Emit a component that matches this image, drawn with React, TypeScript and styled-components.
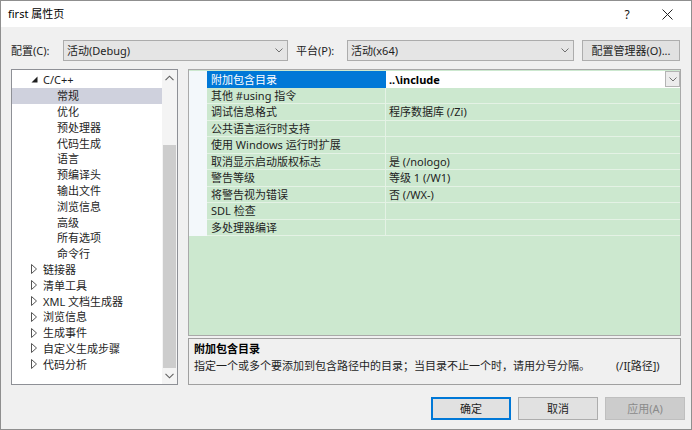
import React from "react";
import styled, { createGlobalStyle, css } from "styled-components";

const GlobalStyle = createGlobalStyle`
  html, body { margin: 0; padding: 0; background: #f0f0f0; }
  body {
    font-family: "Segoe UI", "Noto Sans", "Noto Sans CJK SC", sans-serif;
    font-size: 11px;
    color: #1e1e1e;
  }
  * { box-sizing: border-box; }
`;

const Window = styled.div`
  width: 692px;
  height: 430px;
  border: 1px solid #8f8f8f;
  background: #f0f0f0;
  display: flex;
  flex-direction: column;
  overflow: hidden;
`;

const TitleBar = styled.div`
  height: 26px;
  background: #ffffff;
  display: flex;
  align-items: center;
  padding-left: 7px;
  font-size: 11px;
  color: #000;
`;

const TitleText = styled.div`
  flex: 1;
  line-height: 16px;
`;

const TitleControl = styled.div<{ $w: number }>`
  width: ${(p) => p.$w}px;
  height: 26px;
  display: flex;
  align-items: center;
  justify-content: center;
  font-size: 12px;
  color: #111;
`;

const Body = styled.div`
  flex: 1;
  display: flex;
  flex-direction: column;
  padding: 0 9px 0 10px;
`;

const ConfigRow = styled.div`
  margin-top: 13px;
  height: 21px;
  display: flex;
  align-items: center;
`;

const Label = styled.div<{ $w: number; $ml?: number }>`
  width: ${(p) => p.$w}px;
  margin-left: ${(p) => p.$ml ?? 0}px;
  line-height: 16px;
`;

const Combo = styled.div<{ $w: number }>`
  width: ${(p) => p.$w}px;
  height: 21px;
  background: #e5e5e5;
  border: 1px solid #acacac;
  display: flex;
  align-items: center;
  padding-left: 3px;
  line-height: 16px;
`;

const ComboText = styled.div`
  flex: 1;
`;

const ComboArrow = styled.div`
  width: 17px;
  display: flex;
  align-items: center;
  justify-content: center;
`;

type Variant = "normal" | "focus" | "disabled";

const PushButton = styled.div<{ $w: number; $ml?: number; $h?: number; $variant?: Variant }>`
  width: ${(p) => p.$w}px;
  margin-left: ${(p) => p.$ml ?? 0}px;
  height: ${(p) => p.$h ?? 21}px;
  background: #e1e1e1;
  border: 1px solid #adadad;
  display: flex;
  align-items: center;
  justify-content: center;
  line-height: 16px;
  color: #1e1e1e;
  ${(p) =>
    p.$variant === "focus" &&
    css`
      border: 2px solid #0078d7;
    `}
  ${(p) =>
    p.$variant === "disabled" &&
    css`
      background: #cccccc;
      border-color: #bfbfbf;
      color: #8a8a8a;
    `}
`;

const Main = styled.div`
  margin-top: 8px;
  height: 316px;
  display: flex;
  gap: 10px;
`;

const TreePanel = styled.div`
  width: 167px;
  border: 1px solid #8e9096;
  background: #ffffff;
  display: flex;
`;

const TreeList = styled.div`
  flex: 1;
  padding-top: 2px;
  display: flex;
  flex-direction: column;
`;

const TreeRow = styled.div<{ $level: number; $selected?: boolean }>`
  height: 15.8px;
  display: flex;
  align-items: center;
  padding-left: ${(p) => (p.$level === 0 ? 18 : 45)}px;
  background: ${(p) => (p.$selected ? "#cfd1dd" : "transparent")};
  line-height: 15px;
  white-space: nowrap;
  color: #1e1e1e;
`;

const Toggle = styled.div`
  width: 13px;
  height: 15px;
  display: flex;
  align-items: center;
  padding-left: 1px;
`;

const ScrollBar = styled.div`
  width: 15px;
  display: flex;
  flex-direction: column;
  background: #f4f4f4;
`;

const ScrollArrow = styled.div`
  height: 17px;
  display: flex;
  align-items: center;
  justify-content: center;
`;

const ScrollTrack = styled.div`
  flex: 1;
  padding-top: 58px;
  padding-left: 1px;
`;

const ScrollThumb = styled.div`
  width: 13px;
  height: 223px;
  background: #cdcdcd;
`;

const RightColumn = styled.div`
  width: 493px;
  display: flex;
  flex-direction: column;
  gap: 2px;
`;

const GridPanel = styled.div`
  height: 267px;
  border: 1px solid #a9a9a9;
  background: #cce8cf;
  padding-top: 1px;
  display: flex;
  flex-direction: column;
`;

const GridRow = styled.div`
  height: 16.5px;
  display: grid;
  grid-template-columns: 18px 179px 1fr;
`;

const Gutter = styled.div`
  background: #f3f8fb;
`;

const NameCell = styled.div<{ $selected?: boolean }>`
  border-bottom: 1px solid #e4f2e5;
  border-right: 1px solid #e4f2e5;
  padding-left: 4px;
  display: flex;
  align-items: center;
  line-height: 15px;
  white-space: nowrap;
  ${(p) =>
    p.$selected &&
    css`
      background: #0078d7;
      color: #ffffff;
      border-color: #0078d7;
    `}
`;

const ValueCell = styled.div<{ $selected?: boolean }>`
  border-bottom: 1px solid #e4f2e5;
  padding-left: 3px;
  display: flex;
  align-items: center;
  line-height: 15px;
  white-space: nowrap;
  ${(p) =>
    p.$selected &&
    css`
      background: #ffffff;
      font-weight: bold;
      color: #000;
      border-bottom-color: #ffffff;
    `}
`;

const ValueText = styled.div`
  flex: 1;
`;

const DropButton = styled.div`
  width: 15px;
  height: 16px;
  background: #ececec;
  border: 1px solid #b4b4b4;
  display: flex;
  align-items: center;
  justify-content: center;
`;

const DescPanel = styled.div`
  flex: 1;
  border: 1px solid #a0a0a0;
  background: #f0f0f0;
  padding: 1px 5px 0 5px;
`;

const DescTitle = styled.div`
  font-weight: bold;
  line-height: 17px;
  color: #000;
`;

const DescText = styled.div`
  line-height: 17px;
  display: flex;
  white-space: nowrap;
`;

const DescSwitch = styled.span`
  margin-left: 26px;
`;

const Footer = styled.div`
  margin-top: 12px;
  display: flex;
  justify-content: flex-end;
  margin-right: -3px;
  gap: 7px;
`;

const Chevron = ({ dir, color = "#606060" }: { dir: "up" | "down"; color?: string }) => (
  <svg width="9" height="6" viewBox="0 0 9 6">
    <polyline
      points={dir === "down" ? "0.5,0.8 4.5,4.8 8.5,0.8" : "0.5,5.2 4.5,1.2 8.5,5.2"}
      fill="none"
      stroke={color}
      strokeWidth="1.1"
    />
  </svg>
);

const ComboChevron = () => (
  <svg width="8" height="5" viewBox="0 0 8 5">
    <polyline points="0.5,0.5 4,4 7.5,0.5" fill="none" stroke="#707070" strokeWidth="1" />
  </svg>
);

const OpenTriangle = () => (
  <svg width="7" height="7" viewBox="0 0 7 7">
    <polygon points="6.5,0.5 6.5,6.5 0.5,6.5" fill="#1e1e1e" />
  </svg>
);

const ClosedTriangle = () => (
  <svg width="6" height="10" viewBox="0 0 6 10">
    <polygon points="0.5,0.5 5.5,5 0.5,9.5" fill="none" stroke="#555" strokeWidth="1" />
  </svg>
);

const CloseIcon = () => (
  <svg width="11" height="11" viewBox="0 0 11 11">
    <path d="M0.5 0.5 L10.5 10.5 M10.5 0.5 L0.5 10.5" stroke="#222" strokeWidth="1" />
  </svg>
);

type TreeItem = { label: string; level: number; toggle?: "open" | "closed"; selected?: boolean };

const treeItems: TreeItem[] = [
  { label: "C/C++", level: 0, toggle: "open" },
  { label: "常规", level: 1, selected: true },
  { label: "优化", level: 1 },
  { label: "预处理器", level: 1 },
  { label: "代码生成", level: 1 },
  { label: "语言", level: 1 },
  { label: "预编译头", level: 1 },
  { label: "输出文件", level: 1 },
  { label: "浏览信息", level: 1 },
  { label: "高级", level: 1 },
  { label: "所有选项", level: 1 },
  { label: "命令行", level: 1 },
  { label: "链接器", level: 0, toggle: "closed" },
  { label: "清单工具", level: 0, toggle: "closed" },
  { label: "XML 文档生成器", level: 0, toggle: "closed" },
  { label: "浏览信息", level: 0, toggle: "closed" },
  { label: "生成事件", level: 0, toggle: "closed" },
  { label: "自定义生成步骤", level: 0, toggle: "closed" },
  { label: "代码分析", level: 0, toggle: "closed" },
];

const props: { name: string; value: string; selected?: boolean }[] = [
  { name: "附加包含目录", value: "..\\include", selected: true },
  { name: "其他 #using 指令", value: "" },
  { name: "调试信息格式", value: "程序数据库 (/Zi)" },
  { name: "公共语言运行时支持", value: "" },
  { name: "使用 Windows 运行时扩展", value: "" },
  { name: "取消显示启动版权标志", value: "是 (/nologo)" },
  { name: "警告等级", value: "等级 1 (/W1)" },
  { name: "将警告视为错误", value: "否 (/WX-)" },
  { name: "SDL 检查", value: "" },
  { name: "多处理器编译", value: "" },
];

export default function App() {
  return (
    <>
      <GlobalStyle />
      <Window>
        <TitleBar>
          <TitleText>first 属性页</TitleText>
          <TitleControl $w={40}>?</TitleControl>
          <TitleControl $w={40}>
            <CloseIcon />
          </TitleControl>
          <TitleControl $w={4} />
        </TitleBar>
        <Body>
          <ConfigRow>
            <Label $w={52}>配置(C):</Label>
            <Combo $w={225}>
              <ComboText>活动(Debug)</ComboText>
              <ComboArrow>
                <ComboChevron />
              </ComboArrow>
            </Combo>
            <Label $w={51} $ml={8}>
              平台(P):
            </Label>
            <Combo $w={227}>
              <ComboText>活动(x64)</ComboText>
              <ComboArrow>
                <ComboChevron />
              </ComboArrow>
            </Combo>
            <PushButton $w={98} $ml={8}>
              配置管理器(O)...
            </PushButton>
          </ConfigRow>
          <Main>
            <TreePanel>
              <TreeList>
                {treeItems.map((it, i) => (
                  <TreeRow key={i} $level={it.level} $selected={it.selected}>
                    {it.toggle && (
                      <Toggle>{it.toggle === "open" ? <OpenTriangle /> : <ClosedTriangle />}</Toggle>
                    )}
                    {it.label}
                  </TreeRow>
                ))}
              </TreeList>
              <ScrollBar>
                <ScrollArrow>
                  <Chevron dir="up" />
                </ScrollArrow>
                <ScrollTrack>
                  <ScrollThumb />
                </ScrollTrack>
                <ScrollArrow>
                  <Chevron dir="down" />
                </ScrollArrow>
              </ScrollBar>
            </TreePanel>
            <RightColumn>
              <GridPanel>
                {props.map((p, i) => (
                  <GridRow key={i}>
                    <Gutter />
                    <NameCell $selected={p.selected}>{p.name}</NameCell>
                    <ValueCell $selected={p.selected}>
                      <ValueText>{p.value}</ValueText>
                      {p.selected && (
                        <DropButton>
                          <ComboChevron />
                        </DropButton>
                      )}
                    </ValueCell>
                  </GridRow>
                ))}
              </GridPanel>
              <DescPanel>
                <DescTitle>附加包含目录</DescTitle>
                <DescText>
                  <span>指定一个或多个要添加到包含路径中的目录；当目录不止一个时，请用分号分隔。</span>
                  <DescSwitch>(/I[路径])</DescSwitch>
                </DescText>
              </DescPanel>
            </RightColumn>
          </Main>
          <Footer>
            <PushButton $w={80} $h={23} $variant="focus">
              确定
            </PushButton>
            <PushButton $w={80} $h={23} $variant="normal">
              取消
            </PushButton>
            <PushButton $w={80} $h={23} $variant="disabled">
              应用(A)
            </PushButton>
          </Footer>
        </Body>
      </Window>
    </>
  );
}
